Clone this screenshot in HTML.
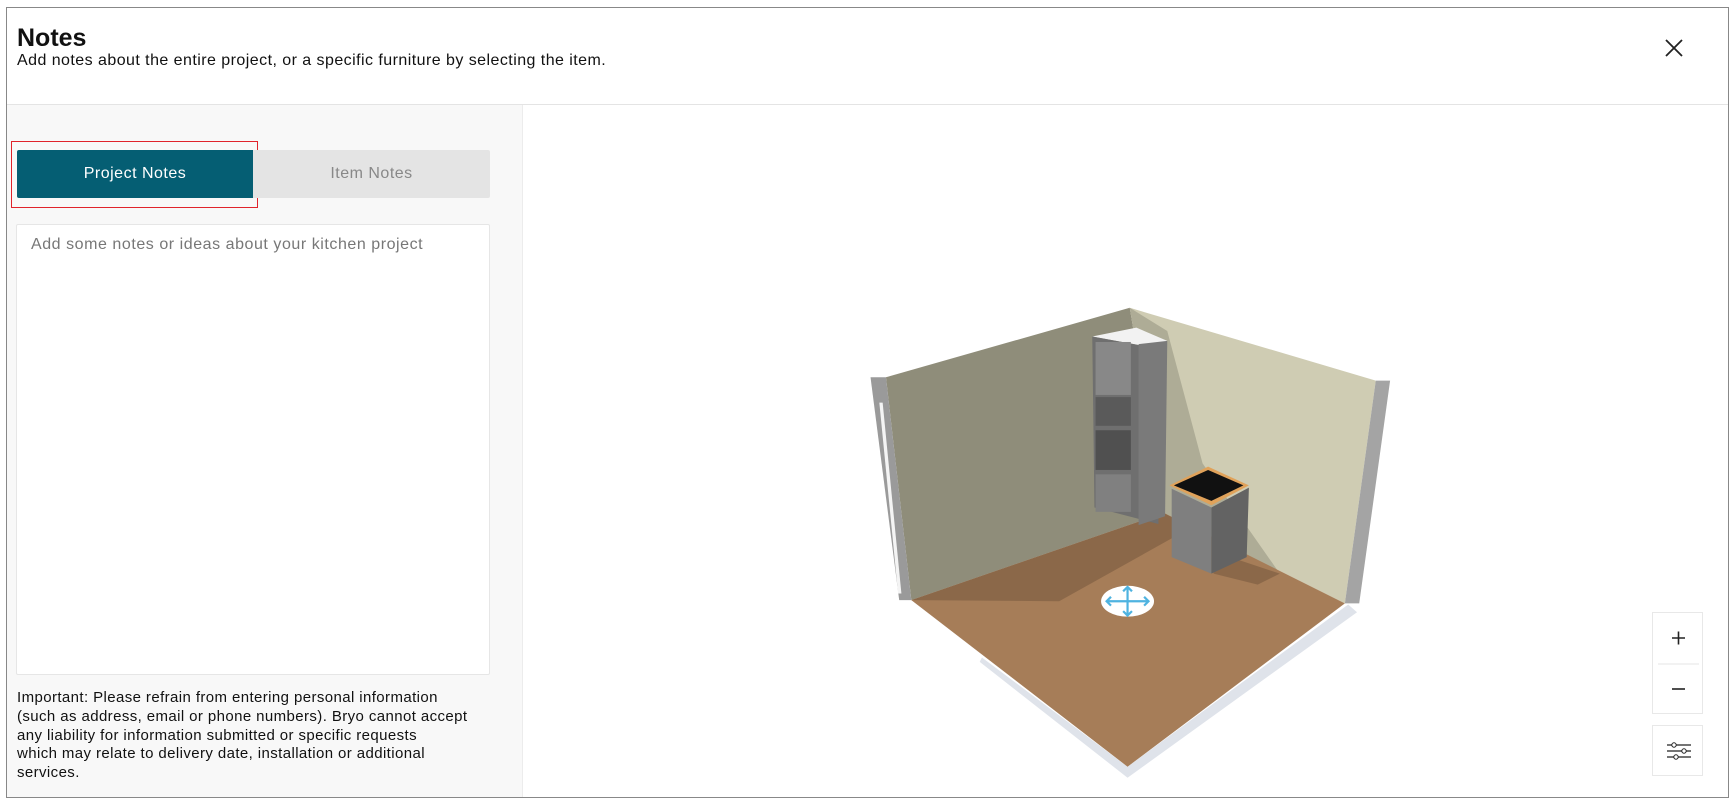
<!DOCTYPE html>
<html><head><meta charset="utf-8"><style>
*{margin:0;padding:0;box-sizing:border-box}
body{width:1730px;height:802px;background:#fff;font-family:"Liberation Sans",sans-serif;position:relative;overflow:hidden;color:#111}
.frame{position:absolute;left:6px;top:7px;width:1723px;height:791px;border:1px solid #888}
.title{position:absolute;left:17px;top:24px;font-size:25px;font-weight:bold;color:#111}
.sub{position:absolute;left:17px;top:52px;font-size:16px;letter-spacing:0.45px;color:#111}
.x{position:absolute;left:1664px;top:38px;width:20px;height:20px}
.hline{position:absolute;left:7px;top:104px;width:1721px;height:1px;background:#e4e4e4}
.left{position:absolute;left:7px;top:105px;width:516px;height:692px;background:#f8f8f8;border-right:1px solid #ececec}
.red{position:absolute;left:11px;top:141px;width:247px;height:67px;border:1px solid #e0232b}
.b1{position:absolute;left:17px;top:150px;width:236px;height:48px;background:#055e73;color:#fff;font-size:16px;letter-spacing:0.5px;text-align:center;line-height:48px;border-radius:2px 0 0 2px}
.b2{position:absolute;left:253px;top:150px;width:237px;height:48px;background:#e4e4e4;color:#888;font-size:16px;letter-spacing:0.5px;text-align:center;line-height:48px;border-radius:0 2px 2px 0}
.ta{position:absolute;left:16px;top:224px;width:474px;height:451px;background:#fff;border:1px solid #e6e6e6;border-radius:2px}
.ph{position:absolute;left:14px;top:11px;font-size:16px;letter-spacing:0.55px;color:#777;white-space:nowrap}
.imp{position:absolute;left:17px;top:689px;font-size:15px;letter-spacing:0.4px;line-height:18.8px;color:#111;white-space:nowrap}
.zb{position:absolute;left:1652px;top:612px;width:51px;height:102px;border:1px solid #e8e8e8;background:#fff}
.sb{position:absolute;left:1652px;top:725px;width:51px;height:51px;border:1px solid #e8e8e8;background:#fff}
svg.room{position:absolute;left:0;top:0}
</style></head><body>
<div class="frame"></div>
<div class="title">Notes</div>
<div class="sub">Add notes about the entire project, or a specific furniture by selecting the item.</div>
<svg class="x" viewBox="0 0 20 20"><path d="M2 2L18 18M18 2L2 18" stroke="#222" stroke-width="1.8"/></svg>
<div class="hline"></div>
<div class="left"></div>
<div class="red"></div>
<div class="b1">Project Notes</div>
<div class="b2">Item Notes</div>
<div class="ta"><div class="ph">Add some notes or ideas about your kitchen project</div></div>
<div class="imp">Important: Please refrain from entering personal information<br>(such as address, email or phone numbers). Bryo cannot accept<br>any liability for information submitted or specific requests<br>which may relate to delivery date, installation or additional<br>services.</div>

<svg class="room" width="1730" height="802" viewBox="0 0 1568 727">
 <polygon points="888,600 1022,705 1230,555 1222,548 1022,695 890,596" fill="#dfe3ea"/>
 <polygon points="803,342 1024,279 1055,465 826,544" fill="#8f8d7a"/>
 <polygon points="1024,279 1247,345 1219,547 1055,465" fill="#cfccb3"/>
 <polygon points="1024,279 1058,300 1090,420 1160,520 1055,465" fill="#aeac96"/>
 <polygon points="789,342 803,342 826,544 815,544" fill="#9a9a9a"/>
 <polygon points="797,365 800,365 817,538 814,538" fill="#f4f4f4"/>
 <polygon points="1247,345 1260,345 1232,547 1219,547" fill="#a4a4a4"/>
 <polygon points="826,544 1055,465 1219,547 1022,695" fill="#a67d58"/>
 <polygon points="826,544 1055,465 1080,478 960,545" fill="#8b6849"/>
 <polygon points="1100,500 1160,520 1140,530 1100,520" fill="#8b6849"/>
 <polygon points="990,305 1030,297 1058,309 1050,316" fill="#f2f2f2"/>
 <polygon points="990,305 1050,316 1050,475 1000,462 992,460" fill="#6f6f6f"/>
 <polygon points="1032,312 1058,309 1056,468 1032,476" fill="#7a7a7a"/>
 <rect x="993" y="310" width="32" height="48" fill="#888"/>
 <rect x="993" y="360" width="32" height="26" fill="#5a5a5a"/>
 <rect x="993" y="390" width="32" height="36" fill="#505050"/>
 <rect x="993" y="430" width="32" height="34" fill="#808080"/>
 <polygon points="1060,440 1095,423 1132,440 1098,458" fill="#e0a25a"/>
 <polygon points="1064,440 1095,426 1127,440 1098,454" fill="#111"/>
 <polygon points="1062,443 1098,460 1098,520 1062,505" fill="#7f7f7f"/>
 <polygon points="1098,460 1132,442 1130,505 1098,520" fill="#636363"/>
 <ellipse cx="1022" cy="545" rx="24" ry="14" fill="#fff"/>
 <path d="M1003 545H1041M1022 532V558M1007 541L1003 545L1007 549M1037 541L1041 545L1037 549M1018 536L1022 532L1026 536M1018 554L1022 558L1026 554" stroke="#4fb3e0" stroke-width="2" fill="none"/>
</svg>

<div class="zb">
 <svg width="51" height="102" viewBox="0 0 51 102"><path d="M19 25H32M25.5 18.5V31.5" stroke="#222" stroke-width="1.6"/><path d="M5 51H46" stroke="#e6e6e6"/><path d="M19 76H32" stroke="#222" stroke-width="1.6"/></svg>
</div>
<div class="sb">
 <svg width="51" height="51" viewBox="0 0 51 51"><path d="M14 19H38M14 25H38M14 31H38" stroke="#222" stroke-width="1.2"/><circle cx="21" cy="19" r="2.2" fill="#fff" stroke="#222"/><circle cx="31" cy="25" r="2.2" fill="#fff" stroke="#222"/><circle cx="23" cy="31" r="2.2" fill="#fff" stroke="#222"/></svg>
</div>
</body></html>
